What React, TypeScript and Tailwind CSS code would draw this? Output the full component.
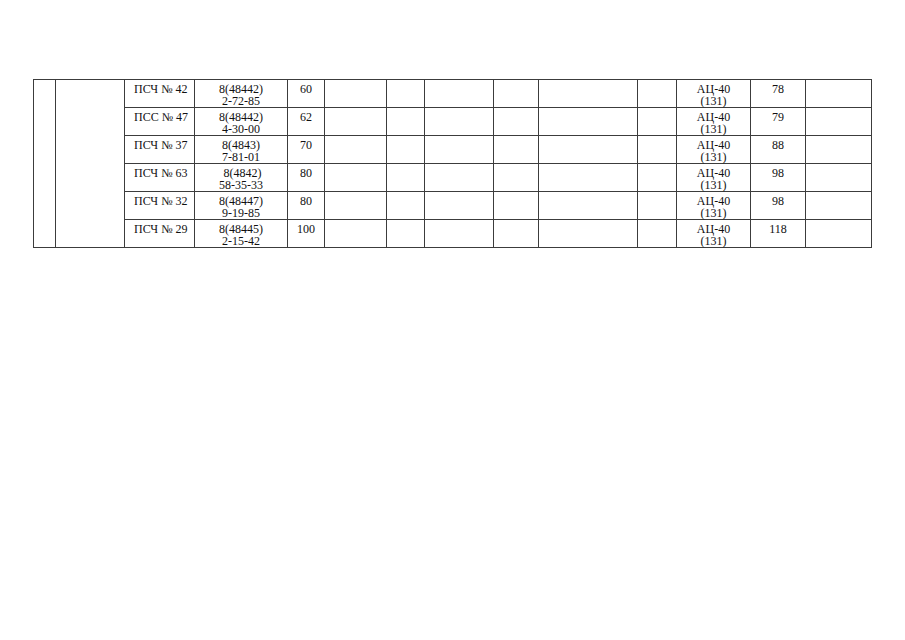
const colWidths = [22, 69, 70, 93, 37, 62, 38, 69, 45, 99, 39, 74, 55, 66];

type Row = {
  unit: string;
  phoneCode: string;
  phone: string;
  distance: string;
  vehicle: string;
  minutes: string;
};

const rows: Row[] = [
  { unit: "ПСЧ № 42", phoneCode: "8(48442)", phone: "2-72-85", distance: "60", vehicle: "АЦ-40", minutes: "78" },
  { unit: "ПСС № 47", phoneCode: "8(48442)", phone: "4-30-00", distance: "62", vehicle: "АЦ-40", minutes: "79" },
  { unit: "ПСЧ № 37", phoneCode: "8(4843)", phone: "7-81-01", distance: "70", vehicle: "АЦ-40", minutes: "88" },
  { unit: "ПСЧ № 63", phoneCode: "\u00a08(4842)", phone: "58-35-33", distance: "80", vehicle: "АЦ-40", minutes: "98" },
  { unit: "ПСЧ № 32", phoneCode: "8(48447)", phone: "9-19-85", distance: "80", vehicle: "АЦ-40", minutes: "98" },
  { unit: "ПСЧ № 29", phoneCode: "8(48445)", phone: "2-15-42", distance: "100", vehicle: "АЦ-40", minutes: "118" },
];

const cell = "border border-[#3c3c3c] align-top p-0 pt-[3px]";

export default function App() {
  return (
    <div
      className="min-h-[640px] w-[905px] bg-white pl-[33px] pt-[79px] text-[12px] leading-[12px] text-[#111]"
      style={{ fontFamily: '"Liberation Serif", "Times New Roman", serif' }}
    >
      <table className="w-[839px] table-fixed border-collapse">
        <colgroup>
          {colWidths.map((w, i) => (
            <col key={i} style={{ width: w }} />
          ))}
        </colgroup>
        <tbody>
          {rows.map((row, idx) => (
            <tr key={idx} className="h-[28px]">
              {idx === 0 && (
                <>
                  <td rowSpan={rows.length} className={cell} />
                  <td rowSpan={rows.length} className={cell} />
                </>
              )}
              <td className={`${cell} pl-[9px] text-left whitespace-nowrap`}>{row.unit}</td>
              <td className={`${cell} text-center`}>
                <div>{row.phoneCode}</div>
                <div>{row.phone}</div>
              </td>
              <td className={`${cell} text-center`}>{row.distance}</td>
              <td className={cell} />
              <td className={cell} />
              <td className={cell} />
              <td className={cell} />
              <td className={cell} />
              <td className={cell} />
              <td className={`${cell} text-center`}>
                <div>{row.vehicle}</div>
                <div>(131)</div>
              </td>
              <td className={`${cell} text-center`}>{row.minutes}</td>
              <td className={cell} />
            </tr>
          ))}
        </tbody>
      </table>
    </div>
  );
}
